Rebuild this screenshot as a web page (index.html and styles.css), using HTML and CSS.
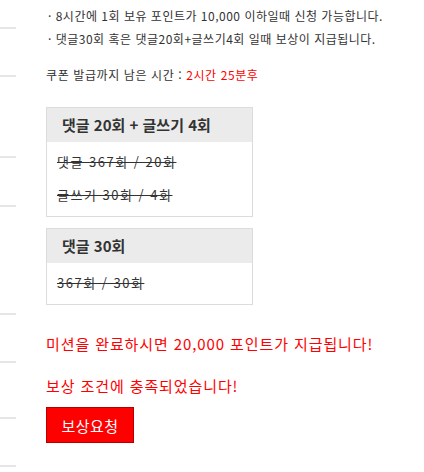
FILE: index.html
```html
<!DOCTYPE html>
<html lang="ko">
<head>
<meta charset="utf-8">
<link rel="stylesheet" href="styles.css">
</head>
<body>
<div class="page">
  <aside class="side">
    <div class="side-item h1"></div>
    <div class="side-item h2"></div>
    <div class="side-item h3"></div>
    <div class="side-item h4"></div>
    <div class="side-item h5"></div>
    <div class="side-item h6"></div>
    <div class="side-item h7"></div>
    <div class="side-item h8"></div>
  </aside>
  <main class="content">
    <ul class="notes">
      <li>· 8시간에 1회 보유 포인트가 10,000 이하일때 신청 가능합니다.</li>
      <li>· 댓글30회 혹은 댓글20회+글쓰기4회 일때 보상이 지급됩니다.</li>
    </ul>
    <p class="timer">쿠폰 발급까지 남은 시간 : <span class="red">2시간 25분후</span></p>
    <div class="box">
      <div class="box-head">댓글 20회 + 글쓰기 4회</div>
      <div class="box-body">
        <div class="row"><s>댓글 367회 / 20회</s></div>
        <div class="row"><s>글쓰기 30회 / 4회</s></div>
      </div>
    </div>
    <div class="box box2">
      <div class="box-head">댓글 30회</div>
      <div class="box-body">
        <div class="row"><s>367회 / 30회</s></div>
      </div>
    </div>
    <p class="msg msg1">미션을 완료하시면 20,000 포인트가 지급됩니다!</p>
    <p class="msg msg2">보상 조건에 충족되었습니다!</p>
    <button class="btn">보상요청</button>
  </main>
</div>
</body>
</html>
```
FILE: styles.css
```css
html, body {
  margin: 0;
  padding: 0;
  background: #fff;
}
body {
  font-family: "Noto Sans CJK KR", "Noto Sans", sans-serif;
  color: #333;
}
.page {
  display: flex;
  align-items: flex-start;
}
.side {
  width: 16px;
  flex: none;
  display: flex;
  flex-direction: column;
}
.side-item {
  border-bottom: 2px solid #e6e6e6;
}
.h1 { height: 27px; }
.h2 { height: 46px; }
.h3 { height: 79px; }
.h4 { height: 47px; }
.h5 { height: 106px; }
.h6 { height: 46px; }
.h7 { height: 54px; }
.h8 { height: 46px; }
.content {
  margin-left: 30px;
  flex: 1;
}
.notes {
  list-style: none;
  margin: 0;
  padding: 4px 0 0 2px;
  font-size: 12px;
  line-height: 23px;
  letter-spacing: 0.5px;
  color: #333;
}
.timer {
  margin: 15px 0 0;
  font-size: 12px;
  line-height: 20px;
  letter-spacing: 0.6px;
  color: #333;
}
.red { color: #f00; }
.box {
  width: 205px;
  border: 1px solid #dcdcdc;
  margin-top: 22px;
}
.box2 { margin-top: 11px; }
.box-head {
  background: #ebebeb;
  height: 34px;
  line-height: 34px;
  padding-left: 15px;
  font-size: 15px;
  font-weight: bold;
  color: #333;
}
.box-body {
  padding: 3px 10px 5px;
  font-size: 13px;
  letter-spacing: 1.5px;
  color: #333;
}
.row {
  line-height: 33px;
}
.row s { text-decoration-thickness: 1px; }
.msg {
  margin: 0;
  color: #f00;
  font-size: 15px;
  line-height: 20px;
  letter-spacing: 0.9px;
}
.msg1 { margin-top: 29px; }
.msg2 { margin-top: 22px; }
.btn {
  margin-top: 11px;
  width: 88px;
  height: 36px;
  background: #f00;
  border: 1px solid #b50000;
  color: #fff;
  font-family: "Noto Sans CJK KR", sans-serif;
  font-size: 15px;
  letter-spacing: 0.5px;
  padding: 0;
  cursor: pointer;
}
```
